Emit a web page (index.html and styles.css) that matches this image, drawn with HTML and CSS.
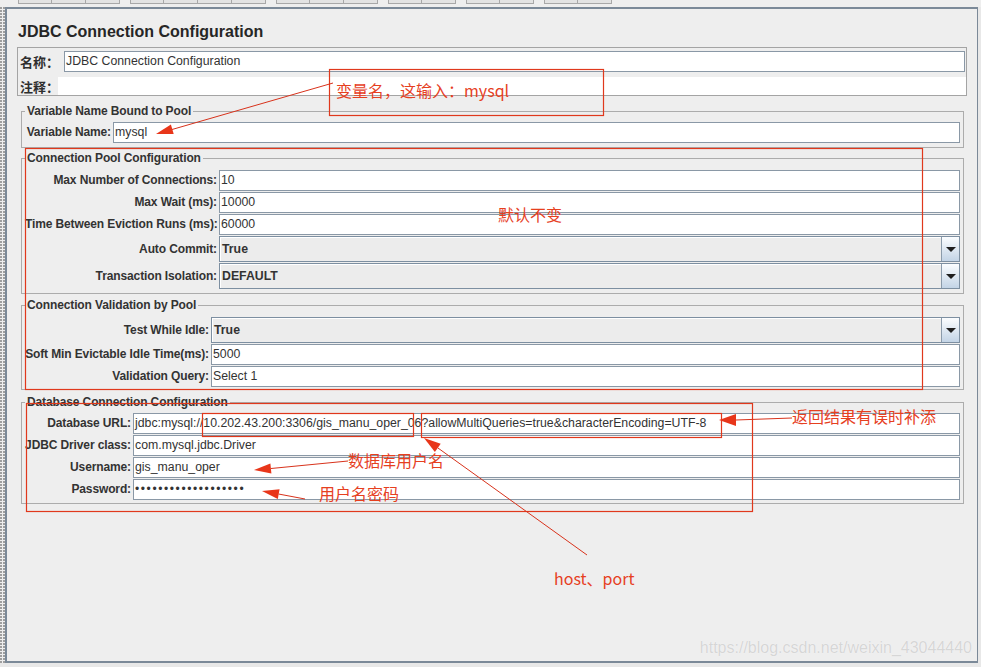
FILE: index.html
```html
<!DOCTYPE html>
<html lang="zh">
<head>
<meta charset="utf-8">
<title>JDBC Connection Configuration</title>
<link rel="stylesheet" href="styles.css">
</head>
<body>
<div class="toolbar">
  <div class="tgroup"><span class="tb"></span><span class="tb"></span><span class="tb"></span></div>
  <div class="tgroup"><span class="tb"></span><span class="tb"></span><span class="tb"></span><span class="tb"></span></div>
  <div class="tgroup"><span class="tb"></span><span class="tb"></span><span class="tb"></span></div>
  <div class="tgroup"><span class="tb"></span><span class="tb"></span></div>
  <div class="tgroup"><span class="tb"></span><span class="tb"></span></div>
  <div class="tgroup"><span class="tb"></span><span class="tb"></span></div>
</div>
<div class="main">
  <div class="splitter"></div>
  <div class="panel">
    <h1 class="title">JDBC Connection Configuration</h1>
    <div class="namebox">
      <div class="nrow nrow-name"><span class="nlabel">名称：</span><div class="field field-name">JDBC Connection Configuration</div></div>
      <div class="nrow nrow-comment"><span class="nlabel">注释：</span><div class="comment"></div></div>
    </div>

    <fieldset class="group g-var">
      <legend>Variable Name Bound to Pool</legend>
      <div class="rows">
        <label class="lbl">Variable Name:</label><div class="field">mysql</div>
      </div>
    </fieldset>

    <fieldset class="group g-pool">
      <legend>Connection Pool Configuration</legend>
      <div class="rows">
        <label class="lbl">Max Number of Connections:</label><div class="field">10</div>
        <label class="lbl">Max Wait (ms):</label><div class="field">10000</div>
        <label class="lbl">Time Between Eviction Runs (ms):</label><div class="field">60000</div>
        <label class="lbl">Auto Commit:</label><div class="combo"><span class="cval">True</span><span class="cbtn"></span></div>
        <label class="lbl">Transaction Isolation:</label><div class="combo"><span class="cval">DEFAULT</span><span class="cbtn"></span></div>
      </div>
    </fieldset>

    <fieldset class="group g-val">
      <legend>Connection Validation by Pool</legend>
      <div class="rows">
        <label class="lbl">Test While Idle:</label><div class="combo"><span class="cval">True</span><span class="cbtn"></span></div>
        <label class="lbl">Soft Min Evictable Idle Time(ms):</label><div class="field">5000</div>
        <label class="lbl">Validation Query:</label><div class="field">Select 1</div>
      </div>
    </fieldset>

    <fieldset class="group g-db">
      <legend>Database Connection Configuration</legend>
      <div class="rows">
        <label class="lbl">Database URL:</label><div class="field">jdbc:mysql://10.202.43.200:3306/gis_manu_oper_06?allowMultiQueries=true&amp;characterEncoding=UTF-8</div>
        <label class="lbl">JDBC Driver class:</label><div class="field">com.mysql.jdbc.Driver</div>
        <label class="lbl">Username:</label><div class="field">gis_manu_oper</div>
        <label class="lbl">Password:</label><div class="field pw">•••••••••••••••••••</div>
      </div>
    </fieldset>
  </div>
</div>

<svg class="overlay" width="981" height="667" viewBox="0 0 981 667" xmlns="http://www.w3.org/2000/svg">
  <g class="boxes" fill="none" stroke="#e0381c" stroke-width="1.2">
    <rect x="329.5" y="69.5" width="274" height="46"/>
    <rect x="25.5" y="148.5" width="897" height="241"/>
    <rect x="26.5" y="403.5" width="726" height="108"/>
    <rect x="202.5" y="413.5" width="211" height="23"/>
    <rect x="421.5" y="413.5" width="300" height="24"/>
  </g>
  <g class="lines" stroke="#d8321b" stroke-width="1">
    <line x1="333" y1="83" x2="172" y2="129.5"/>
    <line x1="792" y1="418" x2="736" y2="420"/>
    <line x1="348" y1="461" x2="271" y2="468.5"/>
    <line x1="305" y1="499" x2="278.5" y2="494"/>
    <line x1="587" y1="555" x2="437.8" y2="447.9"/>
  </g>
  <g class="heads" fill="#e8361a">
    <polygon points="156,134 173.7,134.1 170.9,124.5"/>
    <polygon points="719,420 736,414 736,426"/>
    <polygon points="254,470 271.4,473.4 270.4,463.4"/>
    <polygon points="262,491 277.8,499 279.6,489.2"/>
    <polygon points="424,438 434.9,451.9 440.7,443.8"/>
  </g>
</svg>

<span class="note n1">变量名，这输入：mysql</span>
<span class="note n2">默认不变</span>
<span class="note n3">返回结果有误时补添</span>
<span class="note n4">数据库用户名</span>
<span class="note n5">用户名密码</span>
<span class="note n6">host、port</span>

<div class="watermark">https://blog.csdn.net/weixin_43044440</div>
</body>
</html>
```
FILE: styles.css
```css
* { box-sizing: border-box; }
html, body { margin: 0; padding: 0; }
body {
  width: 981px;
  height: 667px;
  overflow: hidden;
  position: relative;
  background: #e8e8e8;
  font-family: "Liberation Sans", Arial, sans-serif;
  color: #333;
}

/* top toolbar strip (bottoms of toolbar buttons) */
.toolbar {
  height: 7px;
  display: flex;
  gap: 10px;
  padding-left: 18px;
  background: #eeeeee;
}
.tgroup { display: flex; }
.tb {
  width: 34px;
  height: 4px;
  background: #e3e3e3;
  border-right: 1px solid #a8a8a8;
  border-bottom: 1px solid #a8a8a8;
}
.tb:first-child { border-left: 1px solid #a8a8a8; }

.main {
  display: flex;
  height: 656px;
}
.splitter {
  width: 5px;
  flex: none;
  background-color: #eeeeee;
  background-image: radial-gradient(circle at 1px 1px, #9c9c9c 0.7px, transparent 1px);
  background-size: 3px 3px;
}
.panel {
  width: 973px;
  flex: none;
  background: #eeeeee;
  border: 2px solid #7b8998;
  border-right-width: 1px;
  padding: 13px 10px 0 10px;
}

.title {
  margin: 0 0 0 1px;
  font: bold 16px/19px "Liberation Sans", Arial, sans-serif;
  color: #262626;
}

/* name / comment box */
.namebox {
  margin-top: 6px;
  border: 1px solid #a4a4a4;
  padding-top: 2px;
}
.nrow { display: flex; align-items: center; }
.nrow-name { height: 22px; }
.nrow-comment { height: 18px; margin-top: 5px; }
.nlabel {
  flex: none;
  padding-left: 2px;
  white-space: nowrap;
  overflow: visible;
  font: bold 13px/1 "Noto Sans CJK SC", sans-serif;
  color: #2e2e2e;
}
.nrow-name .nlabel { width: 46px; }
.nrow-comment .nlabel { width: 40px; }
.field-name { flex: 1; height: 22px; margin-right: 1px; line-height: 20px; }
.comment { flex: 1; height: 18px; background: #fff; }

/* generic text field */
.field {
  height: 21px;
  min-width: 0;
  background: #fff;
  border: 1px solid #8a98a6;
  padding-left: 1px;
  font: 12.3px/19px "Liberation Sans", Arial, sans-serif;
  color: #333;
  white-space: nowrap;
  overflow: hidden;
}
.field.pw { letter-spacing: 1.6px; font-size: 12px; }

/* titled groups */
.group {
  margin: 0 3px 0 4px;
  padding: 3px 3px 4px 3px;
  border: 1px solid #acacac;
  min-width: 0;
}
.group legend {
  padding: 0 2px;
  font: bold 12px/15px "Liberation Sans", Arial, sans-serif;
  letter-spacing: -0.12px;
  color: #333;
}
.g-var { margin-top: 8px; }
.g-pool { margin-top: 3px; padding-top: 4px; padding-bottom: 4px; }
.g-val { margin-top: 4px; padding-top: 4px; padding-bottom: 2px; }
.g-db { margin-top: 5px; padding-top: 3px; padding-bottom: 3px; }

.rows {
  display: grid;
  grid-template-columns: 86px 1fr;
  column-gap: 2px;
  row-gap: 1px;
  align-items: center;
}
.g-pool .rows { grid-template-columns: 192px 1fr; }
.g-val .rows { grid-template-columns: 184px 1fr; }
.g-db .rows { grid-template-columns: 106px 1fr; }

.lbl {
  text-align: right;
  white-space: nowrap;
  font: bold 12px/15px "Liberation Sans", Arial, sans-serif;
  letter-spacing: -0.12px;
  color: #333;
}

/* combo boxes */
.combo {
  display: flex;
  height: 26px;
  border: 1px solid #7d8fa1;
  background: #ececec;
  box-shadow: inset 1px 1px 0 #ffffff;
}
.cval {
  flex: 1;
  padding-left: 2px;
  font: bold 12.3px/24px "Liberation Sans", Arial, sans-serif;
  color: #333;
}
.cbtn {
  width: 18px;
  flex: none;
  border-left: 1px solid #8b9bab;
  background: linear-gradient(#fbfdff, #c3d4e6);
  display: flex;
  align-items: center;
  justify-content: center;
}
.cbtn::after {
  content: "";
  width: 0;
  height: 0;
  border-left: 5px solid transparent;
  border-right: 5px solid transparent;
  border-top: 5px solid #1f1f1f;
  margin-top: 1px;
}

/* annotation layer drawn over the form */
.overlay {
  position: absolute;
  left: 0;
  top: 0;
  pointer-events: none;
}
.note {
  position: absolute;
  font: 16px/20px "Noto Sans CJK SC", sans-serif;
  color: #e6401f;
  white-space: nowrap;
}
.n1 { left: 336px; top: 80px; }
.n2 { left: 498px; top: 204px; }
.n3 { left: 792px; top: 406px; }
.n4 { left: 348px; top: 450px; }
.n5 { left: 319px; top: 483px; }
.n6 { left: 554px; top: 568px; }

.watermark {
  position: absolute;
  right: 9px;
  top: 638px;
  font: 16px/20px "Liberation Sans", Arial, sans-serif;
  color: #d6d6d6;
  text-shadow: 0 0 1px #ffffff;
  white-space: nowrap;
}
```
